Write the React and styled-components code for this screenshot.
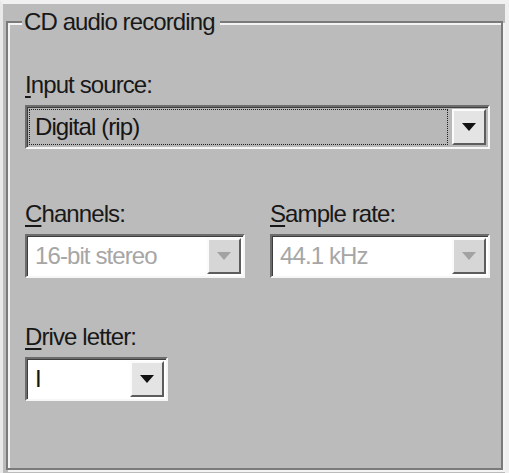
import React from 'react'
import styled, { createGlobalStyle } from 'styled-components'

const GlobalStyle = createGlobalStyle`
  html, body {
    margin: 0;
    padding: 0;
    background: #bbbbbb;
  }
`

const Page = styled.div`
  width: 509px;
  height: 473px;
  box-sizing: border-box;
  overflow: hidden;
  background: #bbbbbb;
  border-top: 4px solid #f1f1f1;
  border-left: 3px solid #e9e9e9;
  border-right: 4px solid #efefef;
  font-family: "Liberation Sans", Arial, sans-serif;
  font-size: 24px;
  letter-spacing: -0.9px;
  color: #181818;
`

const Group = styled.fieldset`
  margin: 5px 2px 0 3px;
  height: 461px;
  box-sizing: border-box;
  padding: 37px 11px 0 17px;
  border: 2px solid #7a7a7a;
  box-shadow: inset 2px 2px 0 #f3f3f3, 2px 2px 0 #f3f3f3;
  min-width: 0;
`

const Title = styled.legend`
  margin-left: -3px;
  padding: 0 5px 0 2px;
  line-height: 26px;
  background: #bbbbbb;
`

const Field = styled.div`
  margin-top: ${p => p.$top || 0}px;
`

const Row = styled.div`
  display: grid;
  grid-template-columns: 220px 220px;
  column-gap: 25px;
  margin-top: ${p => p.$top || 0}px;
`

const Label = styled.div`
  line-height: 26px;
  margin-bottom: 7px;

  u {
    text-decoration-thickness: 2px;
    text-underline-offset: 3px;
  }
`

const Combo = styled.div`
  display: flex;
  width: ${p => p.$w}px;
  height: 44px;
  box-sizing: border-box;
  padding: 2px;
  border: 2px solid;
  border-color: #6c6c6c #f6f6f6 #f6f6f6 #6c6c6c;
  box-shadow: inset 1px 1px 0 #3e3e3e;
  background: ${p => (p.$focused ? '#b8b8b8' : '#ffffff')};
`

const Value = styled.div`
  flex: 1;
  display: flex;
  align-items: center;
  box-sizing: border-box;
  padding-left: 5px;
  border: 1px ${p => (p.$focused ? 'dotted #202020' : 'solid transparent')};
  margin-right: ${p => (p.$focused ? '4px' : '0')};
  color: ${p => (p.$disabled ? '#a6a6a6' : '#151515')};
`

const DropButton = styled.div`
  width: 34px;
  box-sizing: border-box;
  display: flex;
  align-items: center;
  justify-content: center;
  border: 2px solid;
  border-color: #fbfbfb #5c5c5c #5c5c5c #fbfbfb;
  background: ${p => (p.$disabled ? '#d6d6d6' : '#e4e4e4')};
`

function Arrow({ disabled }) {
  return (
    <svg width="14" height="8" viewBox="0 0 14 8">
      <polygon points="0,0 14,0 7,8" fill={disabled ? '#a2a2a2' : '#111111'} />
    </svg>
  )
}

function Dropdown({ width, value, focused, disabled }) {
  return (
    <Combo $w={width} $focused={focused}>
      <Value $focused={focused} $disabled={disabled}>{value}</Value>
      <DropButton $disabled={disabled}>
        <Arrow disabled={disabled} />
      </DropButton>
    </Combo>
  )
}

export default function App() {
  return (
    <Page>
      <GlobalStyle />
      <Group>
        <Title>CD audio recording</Title>

        <Field>
          <Label><u>I</u>nput source:</Label>
          <Dropdown width={465} value="Digital (rip)" focused />
        </Field>

        <Row $top={52}>
          <div>
            <Label><u>C</u>hannels:</Label>
            <Dropdown width={220} value="16-bit stereo" disabled />
          </div>
          <div>
            <Label><u>S</u>ample rate:</Label>
            <Dropdown width={220} value="44.1 kHz" disabled />
          </div>
        </Row>

        <Field $top={46}>
          <Label><u>D</u>rive letter:</Label>
          <Dropdown width={143} value="I" />
        </Field>
      </Group>
    </Page>
  )
}
